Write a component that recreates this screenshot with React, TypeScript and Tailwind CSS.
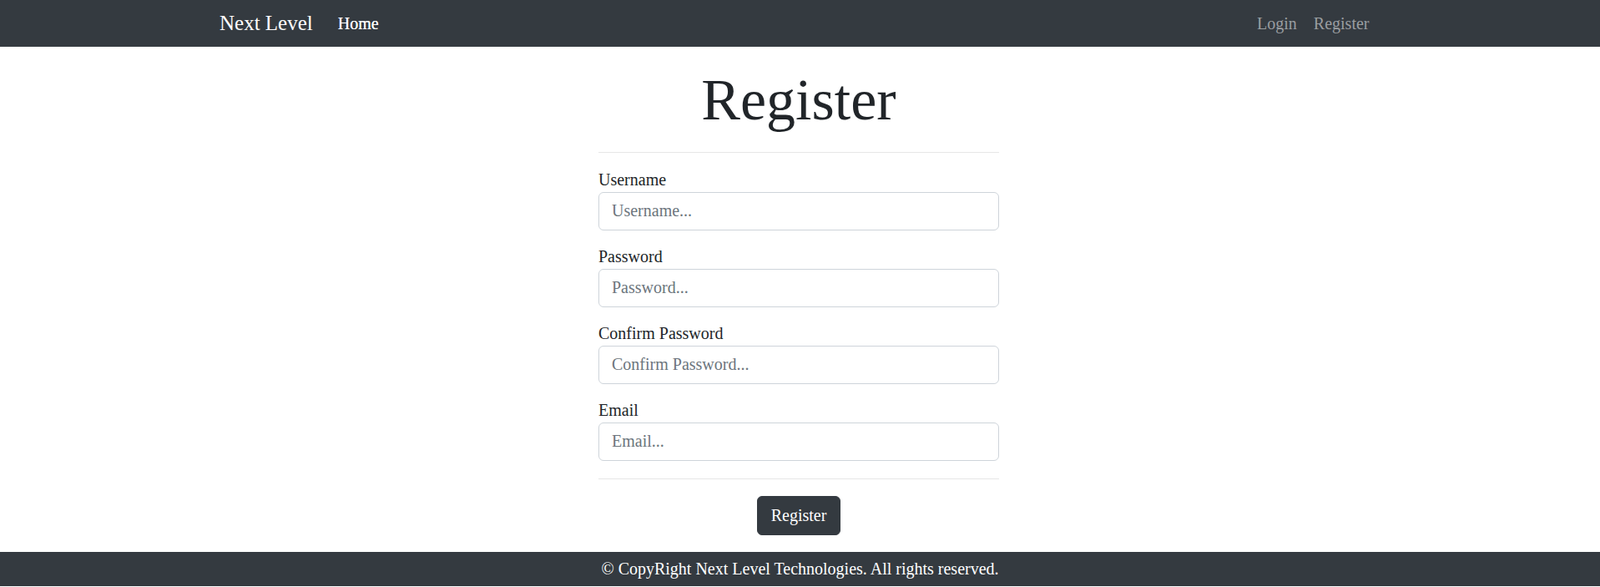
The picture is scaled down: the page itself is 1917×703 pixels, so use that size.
import { useState } from "react";

const FIELDS = [
  { name: "username", label: "Username", type: "text" },
  { name: "password", label: "Password", type: "password" },
  { name: "confirmPassword", label: "Confirm Password", type: "password" },
  { name: "email", label: "Email", type: "email" },
];

export default function App() {
  const [form, setForm] = useState<Record<string, string>>({});

  return (
    <div className="flex flex-col min-h-screen bg-white font-['Liberation_Serif','Times_New_Roman',serif] text-[#212529]">
      <nav className="h-[56px] bg-[#343a40]">
        <div className="flex items-center h-full w-[1391px] mx-auto">
          <a href="#" className="text-[25px] leading-[1.5] text-white mr-[20px]">
            Next Level
          </a>
          <a href="#" className="px-[10px] text-[20px] leading-[30px] font-normal text-white [text-shadow:0_0_0.4px_#fff]">
            Home
          </a>
          <div className="flex ml-auto mr-[3.5px]">
            <a href="#" className="px-[10px] text-[20px] leading-[30px] text-[#9a9da0]">
              Login
            </a>
            <a href="#" className="px-[10px] text-[20px] leading-[30px] text-[#9a9da0]">
              Register
            </a>
          </div>
        </div>
      </nav>

      <main className="w-[483px] pr-[3px] mx-auto">
        <h1 className="mt-[21.7px] text-center text-[70px] leading-[1.2]">Register</h1>
        <hr className="mt-[20px] mb-[17px] border-t border-[#e6e6e6]" />

        <form onSubmit={(e) => e.preventDefault()} className="flex flex-col">
          <div className="flex flex-col gap-[15.5px]">
            {FIELDS.map((f) => (
              <div key={f.name}>
                <label htmlFor={f.name} className="block text-[20px] leading-[30px]">
                  {f.label}
                </label>
                <input
                  id={f.name}
                  type={f.type}
                  value={form[f.name] || ""}
                  onChange={(e) => setForm({ ...form, [f.name]: e.target.value })}
                  placeholder={`${f.label}...`}
                  className="block w-full h-[46.5px] px-[15px] text-[20px] bg-white border border-[#ced4da] rounded-[6px] outline-none placeholder:text-[#6c757d]"
                />
              </div>
            ))}
          </div>

          <hr className="mt-[20.5px] mb-[20px] border-t border-[#e6e6e6]" />

          <div className="flex justify-center mb-[20px]">
            <button
              type="submit"
              className="px-[16px] py-[7.5px] text-[20px] leading-[30px] text-white bg-[#343a40] border border-[#343a40] rounded-[6px]"
            >
              Register
            </button>
          </div>
        </form>
      </main>

      <footer className="py-[5.5px] bg-[#343a40] text-center text-[20px] leading-[30px] text-white">
        © CopyRight Next Level Technologies. All rights reserved.
      </footer>
    </div>
  );
}
